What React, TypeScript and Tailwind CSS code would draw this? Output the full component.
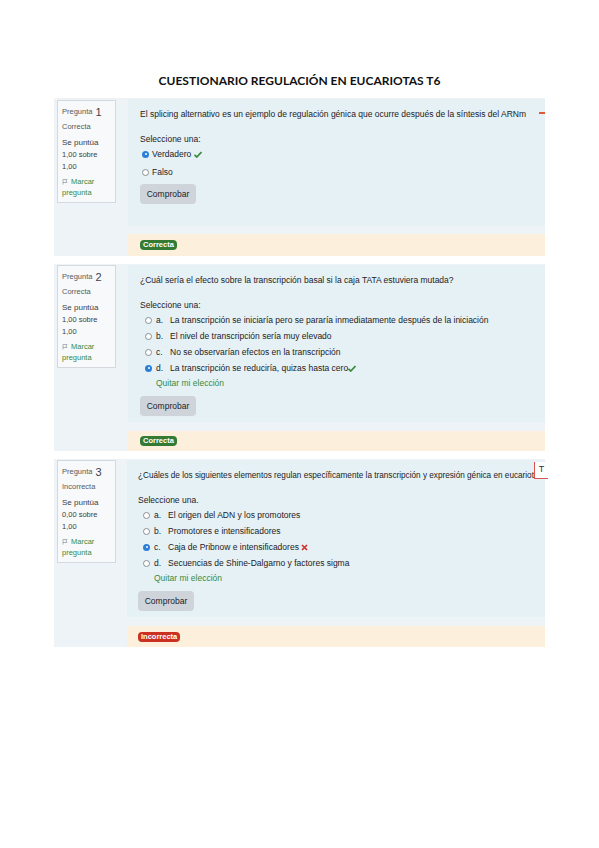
import React from "react";

const font = { fontFamily: '"Liberation Sans", Arial, sans-serif' };

function Radio({ checked }: { checked?: boolean }) {
  return checked ? (
    <span className="inline-flex h-[7px] w-[7px] shrink-0 items-center justify-center rounded-full bg-[#2b7fd9]">
      <span className="h-[2px] w-[2px] rounded-full bg-white" />
    </span>
  ) : (
    <span className="inline-block h-[7px] w-[7px] shrink-0 rounded-full border border-[#8a8f94] bg-white" />
  );
}

function Check() {
  return (
    <svg width="8" height="7" viewBox="0 0 16 14" className="shrink-0">
      <path d="M1 7.5 L5.5 12 L15 2" fill="none" stroke="#3a8a3e" strokeWidth="3.5" />
    </svg>
  );
}

function Cross() {
  return (
    <svg width="7" height="7" viewBox="0 0 14 14" className="ml-[2px] shrink-0">
      <path d="M2 2 L12 12 M12 2 L2 12" fill="none" stroke="#d0342c" strokeWidth="3.5" />
    </svg>
  );
}

function Flag() {
  return (
    <svg width="6" height="6" viewBox="0 0 12 12" className="mr-[3px] shrink-0">
      <path d="M2 11 V1 H10 L8 4 L10 7 H2" fill="none" stroke="#8a8f94" strokeWidth="1.3" />
    </svg>
  );
}

function Info({ n, state, score }: { n: number; state: string; score: string }) {
  return (
    <div className="ml-[3px] mt-[1px] h-[103px] w-[59px] border border-[#d3d9de] bg-[#f7f9fa] px-[4px] pt-[5px] text-[7.5px] text-[#555b61]">
      <div className="flex h-[12px] items-center">
        Pregunta<span className="ml-[3px] text-[11px] text-[#3d4249]">{n}</span>
      </div>
      <div className="mt-[3px] flex h-[12px] items-center">{state}</div>
      <div className="mt-[4px] flex h-[12px] items-center text-[8px] text-[#3c4146]">Se puntúa</div>
      <div className="flex h-[12px] items-center text-[#3c4146]">{score} sobre</div>
      <div className="flex h-[12px] items-center text-[#3c4146]">1,00</div>
      <div className="mt-[3px] flex h-[11px] items-center text-[#3a8a3e]">
        <Flag />
        Marcar
      </div>
      <div className="flex h-[11px] items-center text-[#3a8a3e]">pregunta</div>
    </div>
  );
}

function Button() {
  return (
    <div className="flex h-[20px] w-[56px] items-center justify-center rounded-[4px] bg-[#ced4da] text-[8.5px] text-[#1d2125]">
      Comprobar
    </div>
  );
}

function Badge({ ok }: { ok: boolean }) {
  return (
    <span
      className={`inline-flex h-[10px] items-center rounded-[4px] px-[3px] text-[7.5px] font-bold text-white ${
        ok ? "bg-[#357a32]" : "bg-[#ca3120]"
      }`}
    >
      {ok ? "Correcta" : "Incorrecta"}
    </span>
  );
}

type Opt = { l: string; t: string; checked?: boolean; mark?: "ok" | "bad" };

function Options({ opts }: { opts: Opt[] }) {
  return (
    <div>
      {opts.map((o) => (
        <div key={o.l} className="flex h-[16px] items-center pl-[5px]">
          <Radio checked={o.checked} />
          <span className="ml-[4px] w-[14px]">{o.l}.</span>
          <span>{o.t}</span>
          {o.mark === "ok" && <Check />}
          {o.mark === "bad" && <Cross />}
        </div>
      ))}
    </div>
  );
}

export default function App() {
  return (
    <div className="relative h-[848px] w-[599px] overflow-hidden bg-white text-[8.5px] text-[#1d2125]" style={font}>
      <div
        className="mt-[73px] flex h-[16px] items-center justify-center text-[12px] font-bold text-[#111]"
        style={{ fontFamily: 'Lato, "Liberation Sans", sans-serif' }}
      >
        CUESTIONARIO REGULACIÓN EN EUCARIOTAS T6
      </div>
      <div className="ml-[55px] mt-[9px] w-[490px] border-t border-[#f1f1f1]" />

      {/* Pregunta 1 */}
      <div className="ml-[54px] flex w-[491px] bg-[#edf3f6]">
        <div className="w-[74px] shrink-0">
          <Info n={1} state="Correcta" score="1,00" />
        </div>
        <div className="w-[417px]">
          <div className="relative h-[127px] bg-[#e5f1f4] pl-[12px] pt-[9px]">
            <div className="flex h-[12px] items-center whitespace-nowrap">
              El splicing alternativo es un ejemplo de regulación génica que ocurre después de la síntesis del ARNm
            </div>
            <div className="mt-[13px] flex h-[12px] items-center">Seleccione una:</div>
            <div className="flex h-[18px] items-center pl-[2px]">
              <Radio checked />
              <span className="ml-[3px] mr-[3px]">Verdadero</span>
              <Check />
            </div>
            <div className="flex h-[18px] items-center pl-[2px]">
              <Radio />
              <span className="ml-[3px]">Falso</span>
            </div>
            <div className="mt-[3px]">
              <Button />
            </div>
            <div className="absolute right-0 top-[13px] h-[1.5px] w-[6px] bg-[#e2583a]" />
          </div>
          <div className="mt-[8px] flex h-[22px] items-center bg-[#fcefdc] pl-[12px]">
            <Badge ok />
          </div>
        </div>
      </div>

      {/* Pregunta 2 */}
      <div className="ml-[54px] mt-[8px] flex w-[491px] bg-[#edf3f6]">
        <div className="w-[74px] shrink-0">
          <Info n={2} state="Correcta" score="1,00" />
        </div>
        <div className="w-[417px]">
          <div className="mt-[1px] h-[157px] bg-[#e5f1f4] pl-[12px] pt-[9px]">
            <div className="flex h-[12px] items-center">
              ¿Cuál sería el efecto sobre la transcripción basal si la caja TATA estuviera mutada?
            </div>
            <div className="mt-[13px] flex h-[12px] items-center">Seleccione una:</div>
            <div className="mt-[1px]">
              <Options
                opts={[
                  { l: "a", t: "La transcripción se iniciaría pero se pararía inmediatamente después de la iniciación" },
                  { l: "b", t: "El nivel de transcripción sería muy elevado" },
                  { l: "c", t: "No se observarían efectos en la transcripción" },
                  { l: "d", t: "La transcripción se reduciría, quizas hasta cero", checked: true, mark: "ok" },
                ]}
              />
            </div>
            <div className="mt-[1px] flex h-[12px] items-center pl-[16px] text-[#3a8a3e]">Quitar mi elección</div>
            <div className="mt-[7px]">
              <Button />
            </div>
          </div>
          <div className="mt-[9px] flex h-[20px] items-center bg-[#fcefdc] pl-[12px]">
            <Badge ok />
          </div>
        </div>
      </div>

      {/* Pregunta 3 */}
      <div className="ml-[54px] mt-[8px] flex w-[491px] bg-[#edf3f6]">
        <div className="w-[73px] shrink-0">
          <Info n={3} state="Incorrecta" score="0,00" />
        </div>
        <div className="w-[418px]">
          <div className="relative mt-[1px] h-[157px] overflow-visible bg-[#e5f1f4] pl-[11px] pt-[10px]">
            <div className="flex h-[12px] items-center whitespace-nowrap text-[8.2px]">
              ¿Cuáles de los siguientes elementos regulan específicamente la transcripción y expresión génica en eucariotas?
            </div>
            <div className="absolute left-[407px] top-[2px] flex h-[17px] w-[14px] items-center justify-center border-b border-l border-[#d9534f] bg-white text-[9px] text-[#333]">
              T
            </div>
            <div className="mt-[12px] flex h-[12px] items-center">Seleccione una.</div>
            <div className="mt-[1px]">
              <Options
                opts={[
                  { l: "a", t: "El origen del ADN y los promotores" },
                  { l: "b", t: "Promotores e intensificadores" },
                  { l: "c", t: "Caja de Pribnow e intensificadores", checked: true, mark: "bad" },
                  { l: "d", t: "Secuencias de Shine-Dalgarno y factores sigma" },
                ]}
              />
            </div>
            <div className="mt-[1px] flex h-[12px] items-center pl-[16px] text-[#3a8a3e]">Quitar mi elección</div>
            <div className="mt-[7px]">
              <Button />
            </div>
          </div>
          <div className="mt-[9px] flex h-[21px] items-center bg-[#fcefdc] pl-[11px]">
            <Badge ok={false} />
          </div>
        </div>
      </div>
    </div>
  );
}
